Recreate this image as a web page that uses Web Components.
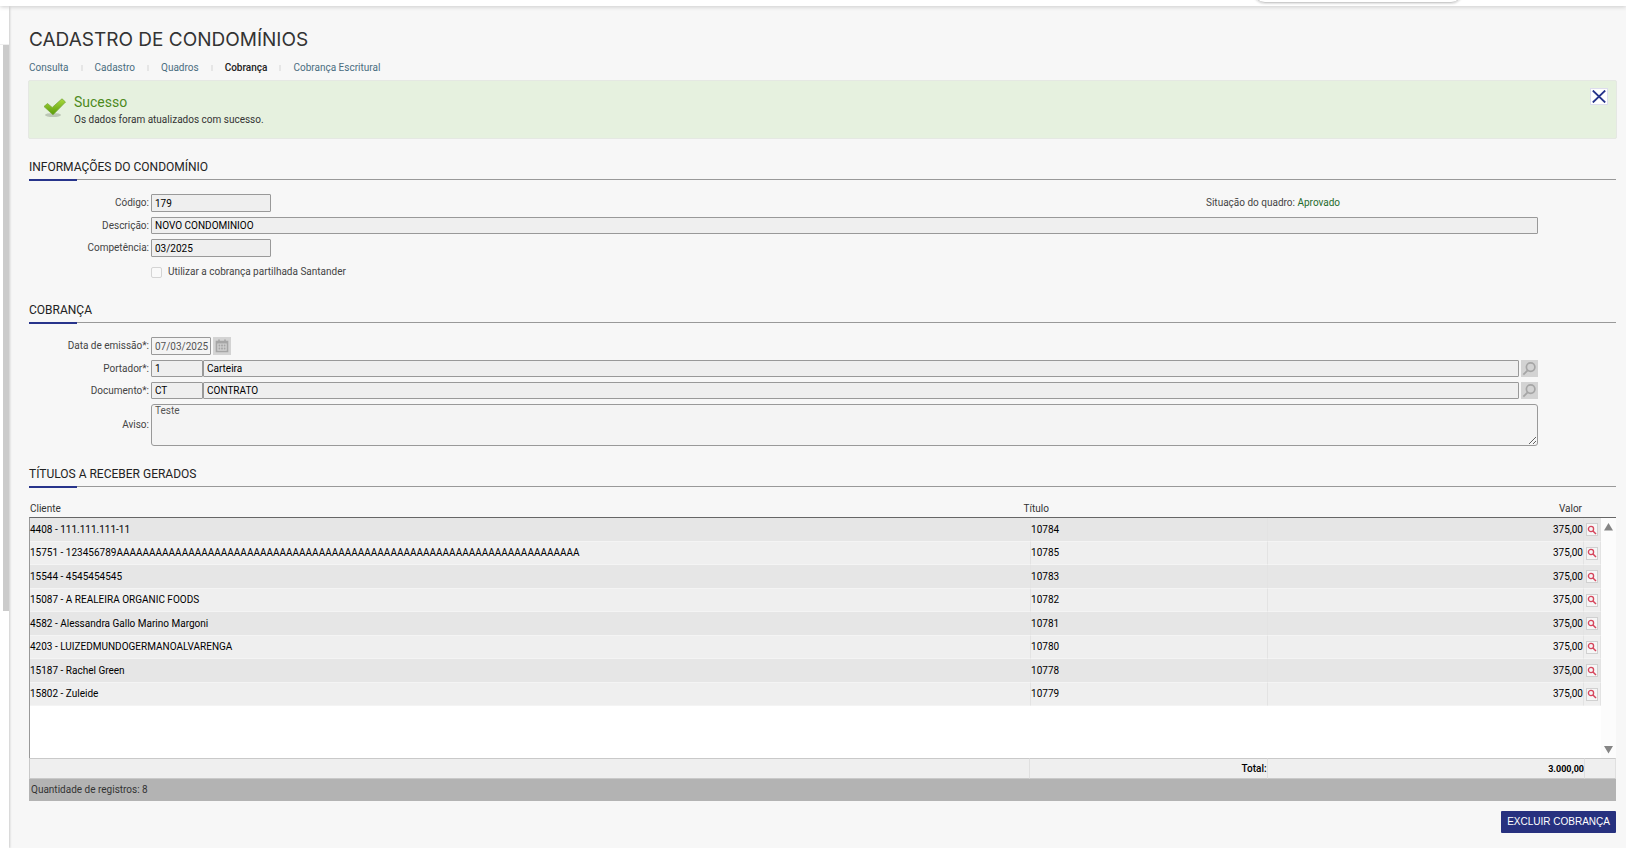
<!DOCTYPE html>
<html lang="pt-BR">
<head>
<meta charset="utf-8">
<title>Cadastro de Condomínios</title>
<style>
  html, body { margin: 0; background: #f7f7f7; }
  body { font-family: Roboto, "Liberation Sans", sans-serif; font-size: 10px; line-height: 12px; color: #444; }
</style>
</head>
<body>
<app-shell>
  <page-title>CADASTRO DE CONDOMÍNIOS</page-title>
  <tab-nav></tab-nav>
  <success-alert heading="Sucesso">Os dados foram atualizados com sucesso.</success-alert>

  <form-section heading="INFORMAÇÕES DO CONDOMÍNIO">
    <field-row label="Código:" value="179" size="medium">
      <status-text slot="after" label="Situação do quadro:">Aprovado</status-text>
    </field-row>
    <field-row label="Descrição:" value="NOVO CONDOMINIOO"></field-row>
    <field-row label="Competência:" value="03/2025" size="medium"></field-row>
    <check-row>Utilizar a cobrança partilhada Santander</check-row>
  </form-section>

  <form-section heading="COBRANÇA">
    <field-row label="Data de emissão*:" value="07/03/2025" size="date" muted icon="calendar"></field-row>
    <field-row label="Portador*:" code="1" value="Carteira" icon="search"></field-row>
    <field-row label="Documento*:" code="CT" value="CONTRATO" icon="search"></field-row>
    <note-row label="Aviso:">Teste</note-row>
  </form-section>

  <form-section heading="TÍTULOS A RECEBER GERADOS">
    <titles-grid></titles-grid>
    <action-button>EXCLUIR COBRANÇA</action-button>
  </form-section>
</app-shell>

<script>
const define = (name, html, setup) => customElements.define(name, class extends HTMLElement {
  connectedCallback() {
    if (this.shadowRoot) return;
    const root = this.attachShadow({ mode: 'open' });
    const template = document.createElement('template');
    template.innerHTML = typeof html === 'function' ? html(this) : html;
    root.append(template.content.cloneNode(true));
    if (setup) setup(root, this);
  }
});

define('app-shell', `
  <style>
    :host { display: grid; grid-template: 6px 1fr / 9px 1fr; min-height: 100vh; }
    header { grid-column: 1 / -1; background: #fff; overflow: hidden; display: flex; justify-content: flex-end;
      align-items: flex-start; box-shadow: 0 1px 4px #ccc; position: relative; }
    .pill { box-sizing: border-box; width: 210px; height: 30px; margin: -27px 10% 0 0; flex: none;
      border: 1px solid #ccc; border-radius: 12px; box-shadow: 0 1px 2px #ddd; }
    aside { background: #fff; box-shadow: 1px 0 2px #ccc; }
    .head { height: 38px; border-bottom: 1px solid #eee; }
    .track { height: calc(100% - 39px); display: flex; justify-content: flex-end; }
    .thumb { width: 6px; height: 70.5%; background: #cbcbcb; }
    main { padding: 22px 10px 12px 20px; min-width: 0; }
  </style>
  <header><div class="pill"></div></header>
  <aside><div class="head"></div><div class="track"><div class="thumb"></div></div></aside>
  <main><slot></slot></main>`);

define('page-title', `
  <style>
    :host { display: block; }
    h1 { margin: 0; font: 400 19px/24px Inter, sans-serif; color: #333; }
  </style>
  <h1><slot></slot></h1>`);

define('tab-nav', `
  <style>
    :host { display: block; margin-top: 9px; }
    nav { display: flex; align-items: center; gap: 12px; height: 14px; }
    a { color: #4a6d80; text-decoration: none; }
    a[aria-current] { color: #222; font-weight: 500; }
    i { width: 2px; height: 6px; background: #e6e6e6; }
  </style>
  <nav>
    <a href="#consulta">Consulta</a><i></i>
    <a href="#cadastro">Cadastro</a><i></i>
    <a href="#quadros">Quadros</a><i></i>
    <a href="#cobranca" aria-current="page">Cobrança</a><i></i>
    <a href="#escritural">Cobrança Escritural</a>
  </nav>`);

define('success-alert', el => `
  <style>
    :host { display: flex; box-sizing: border-box; min-height: 59px; margin: 5px -1px 0; padding: 12px 8px 11px 14px;
      background: #e6f1df; border: 1px solid #e5e8e3; border-radius: 2px; align-items: flex-start; }
    .check { width: 24px; height: 20px; margin: 5px 7px 0 0; flex: none; }
    .text { flex: 1; }
    h2 { margin: 0 0 2px; font-size: 14px; line-height: 18px; font-weight: 400; color: #4d8a1c; }
    p { margin: 0; font-size: 10px; line-height: 14px; color: #333; }
    button { width: 18px; height: 17px; margin: -5px 0 0; padding: 0; border: 1px solid #dde; background: #fff; display: grid; place-items: center; }
  </style>
  <svg class="check" viewBox="0 0 24 20">
    <defs><linearGradient id="g" x1="0" y1="0" x2="0" y2="1"><stop offset="0" stop-color="#a9da3d"/><stop offset="1" stop-color="#589a08"/></linearGradient></defs>
    <ellipse cx="10" cy="17" rx="8" ry="2" fill="#aab5a3" opacity=".7"/>
    <path d="M1 8.500 4.500 5.500 9.200 9.500 19 .8 22.500 4 10 16.800Z" fill="url(#g)" stroke="#79a83a" stroke-width=".8"/>
  </svg>
  <div class="text"><h2>${el.getAttribute('heading')}</h2><p><slot></slot></p></div>
  <button type="button" aria-label="Fechar">
    <svg width="14" height="13" viewBox="0 0 14 13"><path d="M.8.5 13.200 12.500M13.200.5.8 12.500" stroke="#27348b" stroke-width="1.800"/></svg>
  </button>`);

define('form-section', el => `
  <style>
    :host { display: block; margin-top: 21px; }
    h2 { margin: 0; font-size: 12px; line-height: 14px; font-weight: 400; color: #222; }
    .rule { height: 2px; margin: 5px 0 13px; background: linear-gradient(#27348b, #27348b) 0 0 / 48px 2px no-repeat,
      linear-gradient(#999, #999) 0 0 / 100% 1px no-repeat; }
  </style>
  <h2>${el.getAttribute('heading')}</h2>
  <div class="rule"></div>
  <slot></slot>`);

const rowStyle = `
  :host { display: flex; align-items: center; margin: 0 78px 5px 0; }
  label.name { width: 120px; margin-right: 2px; flex: none; text-align: right; }
  input, textarea { box-sizing: border-box; margin: 0; min-width: 0; border: 1px solid #999; border-radius: 1px;
    background: #efefef; color: #000; font: 10px/12px Roboto, sans-serif; }
  input { height: 17px; padding: 0 0 0 3px; }`;

const icons = {
  calendar: '<path d="M3.500 4.500h11v10h-11zM3.500 5.800h11M6 2.500v2M12 2.500v2" stroke-width="1.600"/><path d="M5.500 8.500h7M5.500 11.500h7" stroke-width="1.800" stroke-dasharray="1.800 .8"/>',
  search: '<circle cx="10.200" cy="7.500" r="4.500" stroke-width="1.800"/><path d="M7 11 2.500 15.500" stroke-width="2"/>'
};
const iconNames = { calendar: 'Abrir calendário', search: 'Pesquisar' };

define('field-row', el => {
  const icon = el.getAttribute('icon');
  const code = el.getAttribute('code');
  return `
  <style>${rowStyle}
    .value { flex: 1; }
    :host([size]) .value { flex: none; width: 120px; height: 18px; }
    :host([size="date"]) .value { width: 60px; }
    :host([muted]) .value { color: #545454; background: #f4f4f4; }
    .code { width: 52px; flex: none; }
    button { width: 17px; height: 17px; margin: 0 0 0 2px; padding: 0; border: 0; background: #d3d3d3; display: grid; flex: none; }
    :host([size="date"]) button { width: 18px; height: 18px; }
    svg { fill: none; stroke: #a6a6a6; width: 100%; height: 100%; }
    ::slotted(*) { margin-left: auto; }
  </style>
  <label class="name" for="f">${el.getAttribute('label')}</label>
  ${code ? `<input class="code" id="f" value="${code}" readonly>` : ''}
  <input class="value" ${code ? 'aria-label="Descrição"' : 'id="f"'} value="${el.getAttribute('value')}" readonly>
  ${icon ? `<button type="button" aria-label="${iconNames[icon]}"><svg viewBox="0 0 18 18">${icons[icon]}</svg></button>` : ''}
  <slot name="after"></slot>`;
});

define('status-text', el => `
  <style>
    :host { display: block; width: 332px; }
    span { color: #1f6b2c; }
  </style>
  ${el.getAttribute('label')} <span><slot></slot></span>`);

define('check-row', `
  <style>
    :host { display: flex; padding-left: 122px; height: 20px; }
    label { display: flex; align-items: center; gap: 6px; }
    input { appearance: none; box-sizing: border-box; width: 11px; height: 11px; margin: 0; border: 1px solid #d4d4d4; border-radius: 2px; background: #f9f9f9; }
  </style>
  <label><input type="checkbox" disabled><slot></slot></label>`);

define('note-row', el => `
  <style>${rowStyle}
    :host { margin-bottom: 0; }
    textarea { flex: 1; height: 42px; padding: 0 3px; border-radius: 3px; background: #f4f4f4; color: #545454; display: block; }
  </style>
  <label class="name" for="n">${el.getAttribute('label')}</label>
  <textarea id="n" readonly>${el.textContent.trim()}</textarea>`);

const titles = [
  ['4408 - 111.111.111-11', '10784'],
  ['15751 - 123456789' + 'A'.repeat(71), '10785'],
  ['15544 - 4545454545', '10783'],
  ['15087 - A REALEIRA ORGANIC FOODS', '10782'],
  ['4582 - Alessandra Gallo Marino Margoni', '10781'],
  ['4203 - LUIZEDMUNDOGERMANOALVARENGA', '10780'],
  ['15187 - Rachel Green', '10778'],
  ['15802 - Zuleide', '10779']
];

define('titles-grid', `
  <style>
    :host { display: block; color: #000; }
    table { width: 100%; border-collapse: separate; border-spacing: 0; table-layout: fixed; }
    th, td { padding: 0; text-align: left; font-weight: 400; white-space: nowrap; box-sizing: border-box; }
    .num { text-align: right; }
    .head { color: #333; }
    .head th { height: 16px; padding-left: 1px; }
    .head .num { padding-right: 34px; }
    .view { display: flex; min-height: 240px; background: #fff; border-top: 1px solid #666; border-left: 1px solid #999; align-items: stretch; }
    .rows { flex: 1; min-width: 0; }
    .rows td { height: 23px; background: #efefef; border-right: 1px solid #e3e3e3; }
    .rows tr:nth-child(even) td { height: 24px; border-top: 1px solid #f4f4f4; border-bottom: 1px solid #f4f4f4; }
    .rows tr:nth-child(odd) td { background: #e6e6e6; }
    .rows td:last-child { padding: 0 2px; }
    .rows button { display: grid; place-items: center; box-sizing: border-box; width: 12px; height: 13px; padding: 0; border: 1px solid #d0d0d0; background: #f6f6f6; }
    .bar { width: 15px; background: #fcfcfc; display: flex; flex-direction: column; justify-content: space-between; align-items: center; padding: 5px 0 4px; box-sizing: border-box; }
    .foot td { height: 21px; background: #efefef; border: solid #c9c9c9; border-width: 1px 0; border-right: 1px solid #e0e0e0; font-weight: 500; }
    .foot td:first-child { border-left: 1px solid #c9c9c9; }
    .foot .sum { font-size: 9px; font-weight: 700; }
    .count { padding: 0 2px; background: #b3b3b3; color: #333; line-height: 22px; }
  </style>
  <table class="head">
    <colgroup><col><col style="width:15%"><col style="width:22.400%"></colgroup>
    <thead><tr><th>Cliente</th><th>Título</th><th class="num">Valor</th></tr></thead>
  </table>
  <div class="view">
    <div class="rows"><table>
      <colgroup><col><col style="width:15.100%"><col style="width:20.100%"><col style="width:17px"></colgroup>
      <tbody></tbody>
    </table></div>
    <div class="bar">
      <svg width="9" height="8" viewBox="0 0 9 8"><path d="M4.500 0 9 7.500H0Z" fill="#858585"/></svg>
      <svg width="9" height="8" viewBox="0 0 9 8"><path d="M4.500 7.500 9 0H0Z" fill="#858585"/></svg>
    </div>
  </div>
  <table class="foot">
    <colgroup><col><col style="width:15%"><col style="width:20%"><col style="width:31px"></colgroup>
    <tbody><tr><td></td><td class="num">Total:</td><td class="num sum">3.000,00</td><td></td></tr></tbody>
  </table>
  <div class="count">Quantidade de registros: 8</div>`,
  root => {
    root.querySelector('.rows tbody').innerHTML = titles.map(([client, title]) => `
      <tr><td>${client}</td><td>${title}</td><td class="num">375,00</td><td><button type="button" aria-label="Ver título ${title}">
        <svg width="10" height="10" viewBox="0 0 10 10" fill="none" stroke="#d5465c"><circle cx="4" cy="4" r="2.600" stroke-width="1.300"/><path d="M6 6 9 9" stroke-width="1.500"/></svg>
      </button></td></tr>`).join('');
  });

define('action-button', `
  <style>
    :host { display: flex; justify-content: flex-end; margin-top: 10px; }
    button { height: 22px; padding: 0 6px; border: 0; border-radius: 1px; background: #27317f; color: #fff;
      font: 10px/14px "Liberation Sans", sans-serif; }
  </style>
  <button type="button"><slot></slot></button>`);
</script>
</body>
</html>
